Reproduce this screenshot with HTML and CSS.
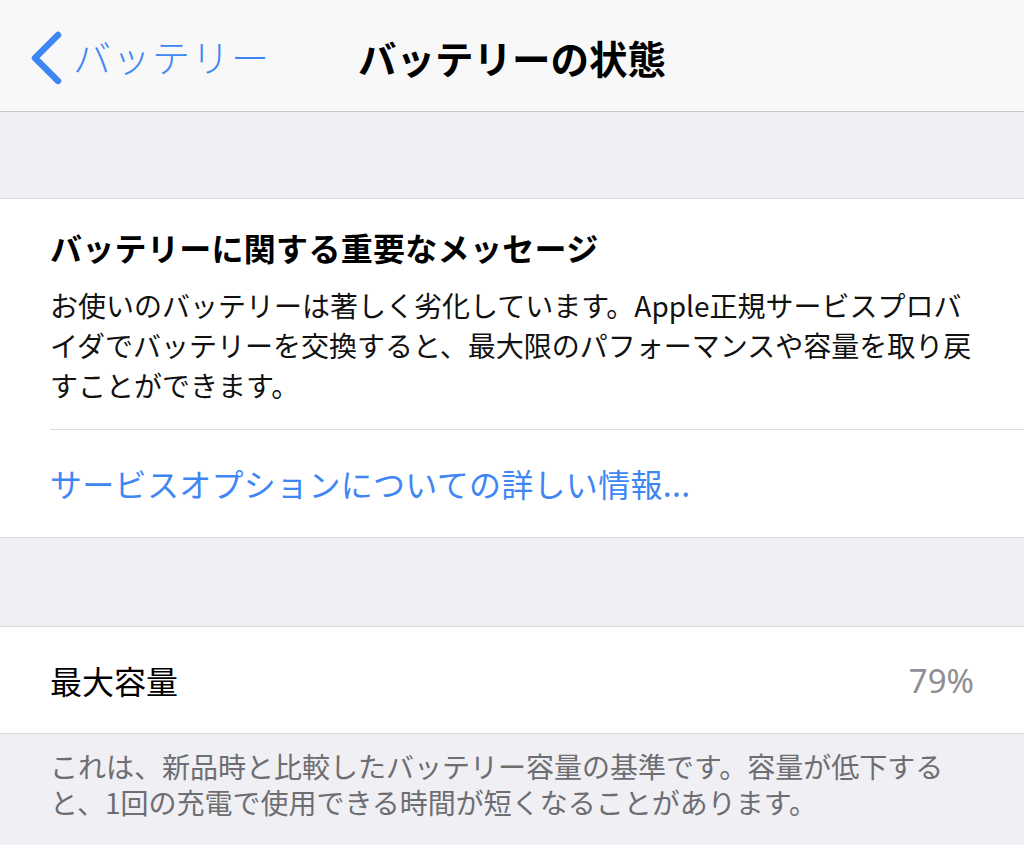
FILE: index.html
```html
<!DOCTYPE html>
<html lang="ja">
<head>
<meta charset="utf-8">
<title>バッテリーの状態</title>
<link rel="stylesheet" href="styles.css">
</head>
<body>
  <header class="navbar">
    <a class="back" href="#">
      <svg class="chevron" width="34" height="54" viewBox="0 0 34 54" aria-hidden="true">
        <path d="M28 4 L5 27 L28 50" fill="none" stroke="#3f86f5" stroke-width="6.5" stroke-linecap="round" stroke-linejoin="round"/>
      </svg>
      <span class="back-label">バッテリー</span>
    </a>
    <h1 class="nav-title">バッテリーの状態</h1>
    <div class="nav-spacer"></div>
  </header>

  <div class="group-gap first-gap"></div>

  <section class="group">
    <div class="message">
      <h2 class="message-title">バッテリーに関する重要なメッセージ</h2>
      <p class="message-body">お使いのバッテリーは著しく劣化しています。Apple正規サービスプロバイダでバッテリーを交換すると、最大限のパフォーマンスや容量を取り戻すことができます。</p>
    </div>
    <a class="link-row" href="#">サービスオプションについての詳しい情報...</a>
  </section>

  <div class="group-gap second-gap"></div>

  <section class="group">
    <div class="value-row">
      <span class="row-label">最大容量</span>
      <span class="row-value">79%</span>
    </div>
  </section>

  <p class="footer-note">これは、新品時と比較したバッテリー容量の基準です。容量が低下すると、1回の充電で使用できる時間が短くなることがあります。</p>
</body>
</html>
```

FILE: styles.css
```css
* {
  box-sizing: border-box;
}

html, body {
  margin: 0;
  padding: 0;
}

body {
  width: 1024px;
  height: 845px;
  overflow: hidden;
  background: #efeff4;
  font-family: "Noto Sans CJK JP", "Noto Sans", sans-serif;
  color: #000;
}

.navbar {
  height: 112px;
  background: #f8f8f8;
  border-bottom: 1px solid #c8c7cc;
  display: grid;
  grid-template-columns: 1fr auto 1fr;
  align-items: center;
}

.back {
  display: flex;
  align-items: center;
  padding-left: 30px;
  text-decoration: none;
  color: #3f86f5;
}

.chevron {
  display: block;
  margin-top: 4px;
}

.back-label {
  margin-left: 9px;
  font-size: 38px;
  font-weight: 300;
  line-height: 50px;
  letter-spacing: 1.5px;
}

.nav-title {
  margin: 0;
  font-size: 38.5px;
  font-weight: 700;
  line-height: 50px;
  margin-top: 2px;
}

.group-gap.first-gap {
  height: 86px;
}

.group-gap.second-gap {
  height: 88px;
}

.group {
  background: #fff;
  border-top: 1px solid #dcdce0;
  border-bottom: 1px solid #dcdce0;
}

.message {
  margin-left: 50px;
  padding: 28px 40px 24px 0;
  border-bottom: 1px solid #dcdce0;
}

.message-title {
  margin: 0;
  font-size: 32px;
  font-weight: 700;
  line-height: 40px;
  letter-spacing: 0.3px;
}

.message-body {
  margin: 18px 0 0;
  font-size: 28px;
  font-weight: 400;
  line-height: 40px;
  color: #111;
}

.link-row {
  display: block;
  padding: 33px 50px 34px;
  font-size: 32px;
  line-height: 40px;
  letter-spacing: 0.3px;
  color: #3f86f5;
  text-decoration: none;
}

.value-row {
  height: 106px;
  padding: 0 50px;
  display: flex;
  align-items: center;
  justify-content: space-between;
  font-size: 32px;
}

.row-label {
  color: #000;
}

.row-value {
  color: #8e8e93;
  font-family: "Noto Sans", "Noto Sans CJK JP", sans-serif;
  font-size: 33px;
  font-weight: 400;
}

.footer-note {
  margin: 0;
  padding: 14px 48px 0 50px;
  font-size: 28px;
  line-height: 36px;
  color: #6d6d72;
}
```
